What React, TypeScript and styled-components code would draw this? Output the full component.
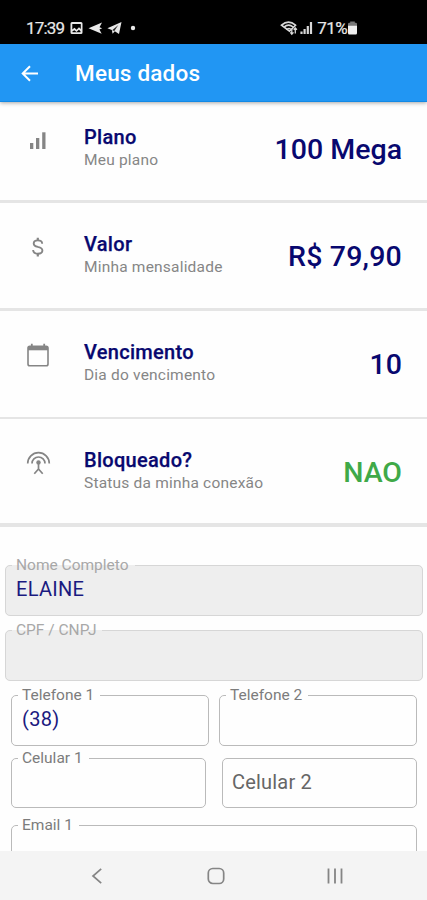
import React from 'react';
import styled, { createGlobalStyle } from 'styled-components';

const GlobalStyle = createGlobalStyle`
  * { box-sizing: border-box; }
  body { margin: 0; background: #fff; font-family: Roboto, "Liberation Sans", sans-serif; }
`;

const Screen = styled.div`
  width: 427px;
  height: 900px;
  display: flex;
  flex-direction: column;
  overflow: hidden;
  background: #fefefe;
`;

const StatusBar = styled.header`
  flex: none;
  height: 44px;
  padding: 11px 69px 0 26px;
  display: flex;
  justify-content: space-between;
  background: #000;
  color: #e8e8e8;
`;

const StatusGroup = styled.div`
  display: flex;
  align-items: center;
  height: 34px;
  svg { display: block; }
`;

const StatusText = styled.span<{ $spacing: number }>`
  font-size: 17px;
  line-height: 20px;
  letter-spacing: ${(p) => p.$spacing}px;
  -webkit-text-stroke: 0.2px #e8e8e8;
`;

const AppBar = styled.div`
  flex: none;
  position: relative;
  height: 58px;
  display: flex;
  align-items: center;
  padding-left: 21px;
  background: #2196f3;
  border-bottom: 1px solid #1289e6;
  box-shadow: 0 1px 4px rgba(0, 0, 0, 0.35);
`;

const BackButton = styled.button`
  width: 18px;
  height: 18px;
  padding: 0;
  border: 0;
  background: none;
  svg { display: block; }
`;

const Title = styled.h1`
  margin: 0 0 0 36px;
  font-size: 22.5px;
  line-height: 28px;
  font-weight: 500;
  color: #fff;
  letter-spacing: 0.2px;
`;

const Content = styled.main`
  flex: 1;
  min-height: 0;
  overflow: hidden;
`;

const Row = styled.section<{ $height: number; $border: number }>`
  height: ${(p) => p.$height}px;
  border-bottom: ${(p) => p.$border}px solid #e5e5e5;
  display: flex;
  padding: 23px 25px 0 25px;
`;

const RowList = styled.div`
  ${Row}:not(:first-child) { padding-top: 29px; }
`;

const RowIcon = styled.div`
  width: 26px;
  height: 30px;
  margin-right: 33px;
  display: flex;
  align-items: center;
  justify-content: center;
  color: #858585;
`;

const RowText = styled.div`
  flex: 1;
`;

const RowTitle = styled.div`
  font-size: 20px;
  line-height: 24px;
  font-weight: 500;
  color: #08086f;
  -webkit-text-stroke: 0.25px #08086f;
  letter-spacing: 0.3px;
`;

const RowSubtitle = styled.div`
  font-size: 15.5px;
  line-height: 22px;
  color: #868686;
  letter-spacing: 0.2px;
`;

const RowValue = styled.div<{ $color: string; $spacing?: number }>`
  margin-top: 7px;
  height: 36px;
  font-size: 28.5px;
  line-height: 36px;
  font-weight: 500;
  color: ${(p) => p.$color};
  letter-spacing: ${(p) => p.$spacing ?? 0}px;
`;

const Form = styled.form`
  display: flex;
  flex-direction: column;
`;

const FieldRow = styled.div<{ $inset: number; $top: number; $gap?: number }>`
  display: flex;
  gap: ${(p) => p.$gap ?? 0}px;
  margin-top: ${(p) => p.$top}px;
  padding: 0 ${(p) => p.$inset + 4}px 0 ${(p) => p.$inset + 5}px;
`;

const Field = styled.fieldset<{ $filled?: boolean; $height?: number }>`
  flex: 1;
  min-width: 0;
  height: ${(p) => p.$height ?? 59}px;
  margin: 0;
  padding: 0 10px 0 6px;
  border: 1px solid ${(p) => (p.$filled ? '#d6d6d6' : '#bababa')};
  border-radius: 5px;
  background: ${(p) => (p.$filled ? '#eeeeee' : 'transparent')};
`;

const Legend = styled.legend<{ $muted?: boolean }>`
  height: 17px;
  padding: 0 6px 0 4px;
  font-size: 15.5px;
  line-height: 17px;
  color: ${(p) => (p.$muted ? '#a8a8a8' : '#7c7c7c')};
`;

const FieldValue = styled.div`
  padding: 3px 0 0 4px;
  font-size: 20px;
  line-height: 24px;
  color: #1a1a80;
  letter-spacing: 0.3px;
`;

const EmptyField = styled.div`
  flex: 1;
  height: 50px;
  margin-top: 8px;
  padding: 0 7px 2px 9px;
  display: flex;
  align-items: center;
  border: 1px solid #bababa;
  border-radius: 5px;
  font-size: 20px;
  color: #666;
  letter-spacing: 0.2px;
`;

const NavBar = styled.nav`
  flex: none;
  height: 49px;
  display: grid;
  grid-template-columns: 119px 119px 119px;
  justify-content: center;
  align-items: center;
  justify-items: center;
  padding-left: 5px;
  background: #f4f4f4;
  svg { display: block; }
`;

const BarsIcon = () => (
  <svg width="18" height="18" viewBox="0 0 18 18" fill="currentColor">
    <rect x="1" y="12" width="3.3" height="6" />
    <rect x="7" y="7" width="3.3" height="11" />
    <rect x="13.2" y="1.3" width="3.3" height="16.7" />
  </svg>
);

const DollarIcon = () => (
  <svg width="14" height="20" viewBox="0 0 14 20" fill="none" stroke="currentColor" strokeWidth="1.9">
    <path d="M11.2 6.7C11.1 4.5 9.4 3.4 6.8 3.4 4.3 3.4 2.7 4.6 2.7 6.4 2.7 8.4 4.2 9.2 6.8 9.9 9.8 10.6 11.4 11.5 11.4 13.5 11.4 15.4 9.7 16.7 6.8 16.7 4 16.7 2.3 15.4 2.1 13" />
    <path d="M6.8 .7V3.5M6.8 16.6V19.4" strokeWidth="2.2" />
  </svg>
);

const CalendarIcon = () => (
  <svg width="24" height="26" viewBox="0 0 24 26" fill="none" stroke="currentColor">
    <rect x="2" y="4.3" width="20" height="19.4" rx="1.8" strokeWidth="1.6" />
    <path d="M2 6.3H22" strokeWidth="4" />
    <path d="M5.8 1.7V5M18.2 1.7V5" strokeWidth="1.8" />
  </svg>
);

const AntennaIcon = () => (
  <svg width="25" height="24" viewBox="0 0 25 24" fill="none" stroke="currentColor" strokeWidth="1.7">
    <path d="M1.7 12.5A10.8 10.8 0 0 1 23.3 12.5" />
    <path d="M6 12.5A6.5 6.5 0 0 1 19 12.5" />
    <path d="M12.5 12V18M8.3 22.8L12.5 18L16.7 22.8" />
    <circle cx="12.5" cy="11.4" r="2.2" fill="currentColor" stroke="none" />
  </svg>
);

type RowData = {
  icon: React.ReactNode;
  title: string;
  subtitle: string;
  value: string;
  color: string;
  height: number;
  border: number;
  spacing?: number;
};

const NAVY = '#08086f';

const rows: RowData[] = [
  { icon: <BarsIcon />, title: 'Plano', subtitle: 'Meu plano', value: '100 Mega', color: NAVY, height: 101, border: 3 },
  { icon: <DollarIcon />, title: 'Valor', subtitle: 'Minha mensalidade', value: 'R$ 79,90', color: NAVY, height: 108, border: 3, spacing: 0.2 },
  { icon: <CalendarIcon />, title: 'Vencimento', subtitle: 'Dia do vencimento', value: '10', color: NAVY, height: 108, border: 2 },
  { icon: <AntennaIcon />, title: 'Bloqueado?', subtitle: 'Status da minha conexão', value: 'NAO', color: '#3fa948', height: 108, border: 4 },
];

export default function App() {
  return (
    <Screen>
      <GlobalStyle />
      <StatusBar>
        <StatusGroup>
          <StatusText $spacing={-0.8}>17:39</StatusText>
          <svg width="72" height="16" viewBox="0 0 72 16" fill="#e8e8e8">
            <path fillRule="evenodd" d="M8 2H17Q18.5 2 18.5 3.5V12.5Q18.5 14 17 14H8Q6.5 14 6.5 12.5V3.5Q6.5 2 8 2ZM8.3 4V9.5L10.5 7.8L12.5 9.7L15 7.3L16.8 9V4ZM8.5 11.2V12.2H16.5V11.2L14.9 9.8L12.5 12L10.5 10.2Z" />
            <path d="M24.5 8.3L38 2.4L35.5 7.2L38.2 8.3L35.4 9.5L37.7 13.8Z" />
            <path d="M43.4 8.2L57.5 2L55 14L50.8 11.2L48.6 13.7L47.8 10Z" />
            <path d="M48.2 10.2L54.3 5L50.3 11Z" fill="#222" />
            <circle cx="69" cy="8" r="2.2" />
          </svg>
        </StatusGroup>
        <StatusGroup>
          <svg width="37" height="16" viewBox="0 0 37 16" fill="none" stroke="#d8d8d8" strokeWidth="1.6">
            <path d="M1.5 5.2Q8.5 -.8 15.5 5.2L9.5 11.2Z" />
            <path d="M4 7.2Q8.5 3.2 13.2 7M6.5 9.7Q8.5 7.5 10.9 9.3" />
            <path d="M11.8 8.5V14M10.3 12.4L11.8 14.2L13.5 12.4M15.3 13.5V8M13.7 9.8L15.3 8L16.9 9.8" strokeWidth="1.3" />
            <path d="M21.5 11.5V14M24.6 9V14M27.8 6V14M31 2V14" strokeWidth="2.2" />
          </svg>
          <StatusText $spacing={-0.6}>71%</StatusText>
          <svg width="11" height="16" viewBox="0 0 11 16" fill="#eee">
            <path d="M3.2 1.5H7.8V2.8H8.7Q10 2.8 10 4V5.5H1V4Q1 2.8 2.3 2.8H3.2Z" fill="#777" />
            <path d="M1 5.5H10V13Q10 14.5 8.7 14.5H2.3Q1 14.5 1 13Z" />
          </svg>
        </StatusGroup>
      </StatusBar>

      <AppBar>
        <BackButton aria-label="Voltar">
          <svg width="18" height="18" viewBox="0 0 18 18" fill="none" stroke="#fff" strokeWidth="2">
            <path d="M17 9.5H2M9 2.2L1.7 9.5L9 16.8" />
          </svg>
        </BackButton>
        <Title>Meus dados</Title>
      </AppBar>

      <Content>
        <RowList>
          {rows.map((r) => (
            <Row key={r.title} $height={r.height} $border={r.border}>
              <RowIcon>{r.icon}</RowIcon>
              <RowText>
                <RowTitle>{r.title}</RowTitle>
                <RowSubtitle>{r.subtitle}</RowSubtitle>
              </RowText>
              <RowValue $color={r.color} $spacing={r.spacing}>{r.value}</RowValue>
            </Row>
          ))}
        </RowList>

        <Form>
          <FieldRow $inset={0} $top={30}>
            <Field $filled>
              <Legend $muted>Nome Completo</Legend>
              <FieldValue>ELAINE</FieldValue>
            </Field>
          </FieldRow>
          <FieldRow $inset={0} $top={6}>
            <Field $filled>
              <Legend $muted>CPF / CNPJ</Legend>
            </Field>
          </FieldRow>
          <FieldRow $inset={6} $top={6} $gap={10}>
            <Field>
              <Legend>Telefone 1</Legend>
              <FieldValue>(38)</FieldValue>
            </Field>
            <Field>
              <Legend>Telefone 2</Legend>
            </Field>
          </FieldRow>
          <FieldRow $inset={6} $top={4} $gap={16}>
            <Field $height={58}>
              <Legend>Celular 1</Legend>
            </Field>
            <EmptyField>Celular 2</EmptyField>
          </FieldRow>
          <FieldRow $inset={6} $top={9}>
            <Field>
              <Legend>Email 1</Legend>
            </Field>
          </FieldRow>
        </Form>
      </Content>

      <NavBar>
        <svg width="12" height="18" viewBox="0 0 12 18" fill="none" stroke="#858585" strokeWidth="1.7">
          <path d="M10.2 1.8L2 9L10.2 16.2" />
        </svg>
        <svg width="18" height="18" viewBox="0 0 18 18" fill="none" stroke="#858585" strokeWidth="1.7">
          <rect x="1.3" y="1.5" width="15.4" height="15" rx="4.5" />
        </svg>
        <svg width="18" height="18" viewBox="0 0 18 18" fill="none" stroke="#858585" strokeWidth="1.8">
          <path d="M2.5 1.5V16.5M9 1.5V16.5M15.5 1.5V16.5" />
        </svg>
      </NavBar>
    </Screen>
  );
}
